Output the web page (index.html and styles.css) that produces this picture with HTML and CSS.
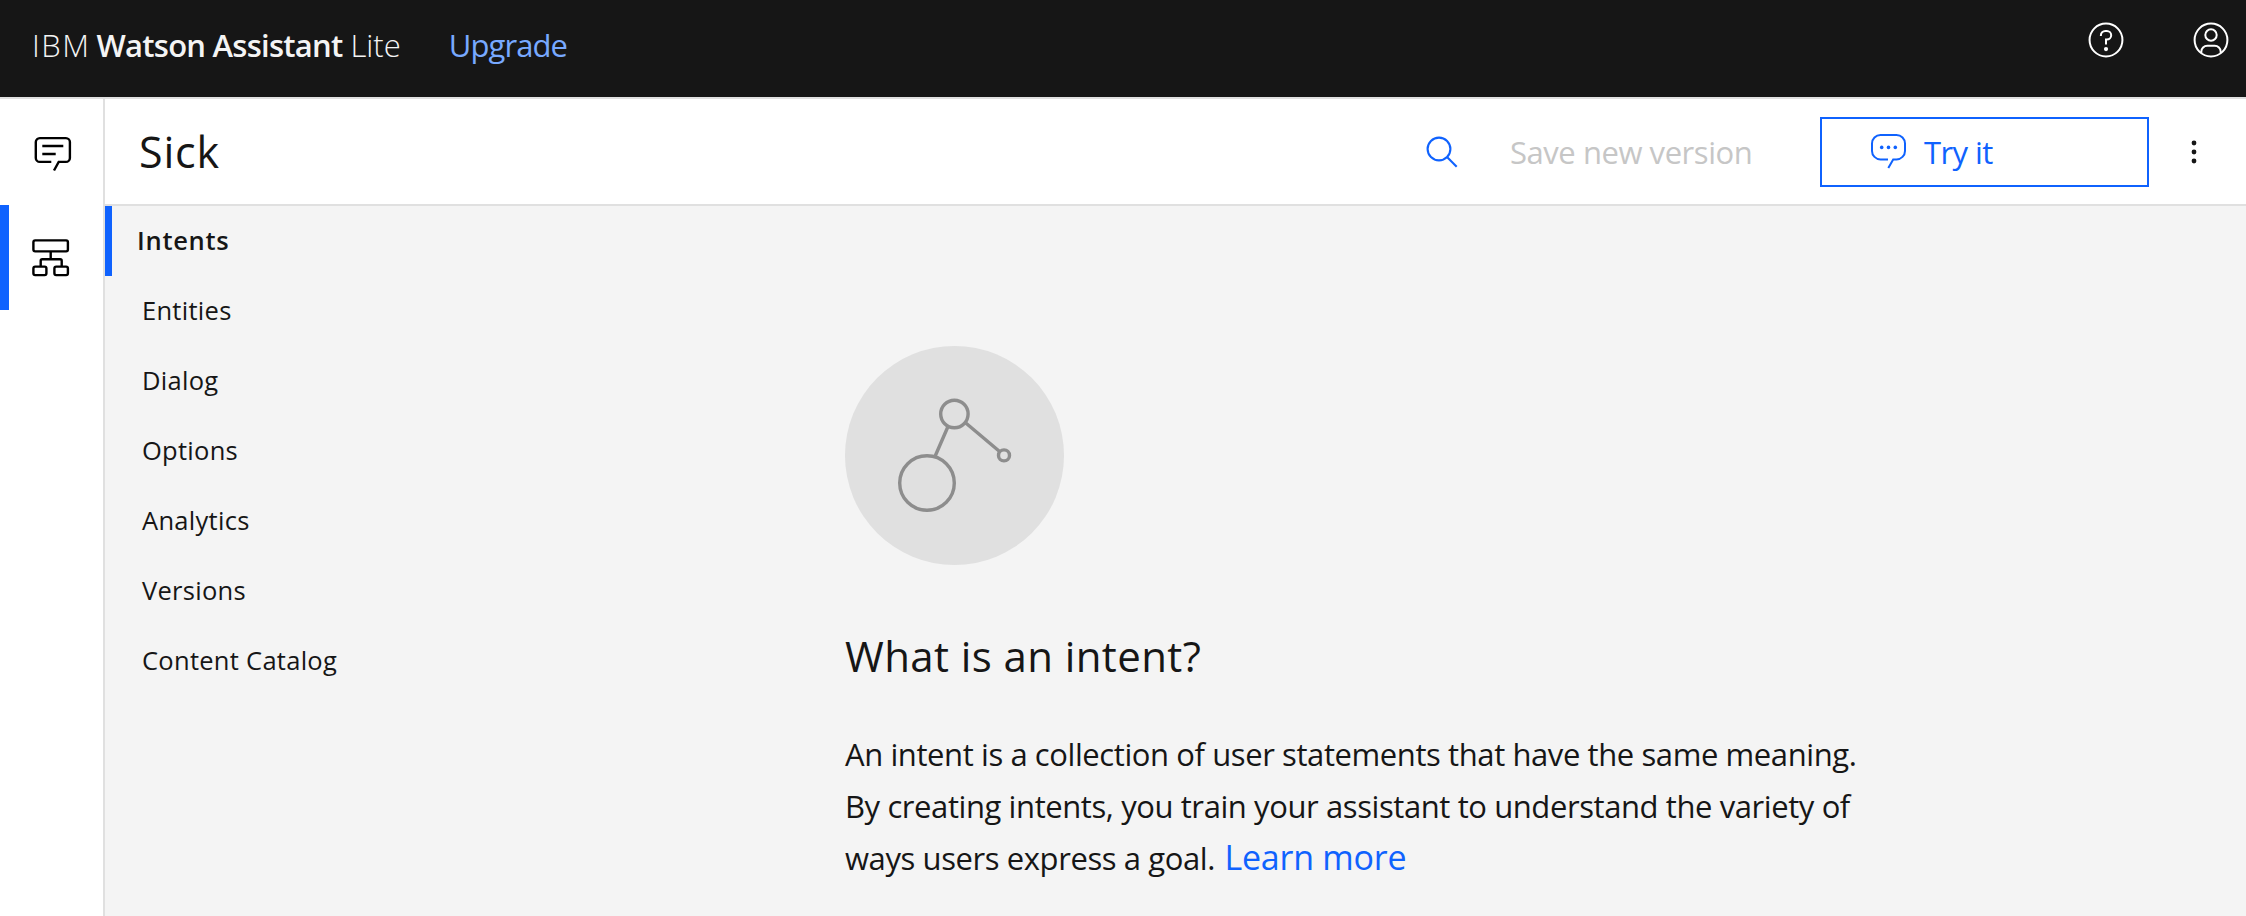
FILE: index.html
```html
<!DOCTYPE html>
<html lang="en">
<head>
<meta charset="utf-8">
<title>IBM Watson Assistant</title>
<link rel="stylesheet" href="styles.css">
</head>
<body>
<header class="topbar">
  <div class="brand"><span class="brand-ibm">IBM</span><strong class="brand-name">Watson Assistant</strong><span class="brand-plan">Lite</span></div>
  <a class="upgrade">Upgrade</a>
  <div class="topbar-actions">
    <svg class="icon-help" width="40" height="40" viewBox="0 0 32 32" fill="#fff"><circle cx="16" cy="16" r="13.150" fill="none" stroke="#fff" stroke-width="1.600"/><circle cx="16" cy="23.200" r="1.700"/><path d="M11.900 12.800v-.5a3.600 3.600 0 0 1 3.600-3.600h1.200a3.400 3.400 0 0 1 0 6.900H16v4" fill="none" stroke="#fff" stroke-width="1.600"/></svg>
    <svg class="icon-user" width="40" height="40" viewBox="0 0 40 40" fill="none" stroke="#fff" stroke-width="2"><circle cx="20" cy="20" r="16.400"/><circle cx="20" cy="15" r="5.700"/><path d="M10.300 33v-1.300a6 6 0 0 1 6-6h7.400a6 6 0 0 1 6 6V33"/></svg>
  </div>
</header>
<div class="shell">
  <nav class="rail">
    <a class="rail-item rail-chat"><svg width="40" height="40" viewBox="0 0 40 40" fill="none" stroke="#000" stroke-width="2.400"><path d="M18.300 27.900H6.800a4 4 0 0 1-4-4V8.100a4 4 0 0 1 4-4h26.100a4 4 0 0 1 4 4v15.800a4 4 0 0 1-4 4h-7.200L21 36.500M9.300 12h21M9.300 20h13.400"/></svg></a>
    <a class="rail-item rail-skills"><svg width="40" height="40" viewBox="0 0 40 40" fill="none" stroke="#000" stroke-width="2.400"><rect x="2.400" y="2.400" width="34.500" height="11" rx="1.800"/><rect x="2.400" y="28.600" width="13" height="8.500" rx="1.800"/><rect x="23.400" y="28.600" width="13.500" height="8.500" rx="1.800"/><path d="M19.700 13.400v8M9.700 28.600v-5.800a1.500 1.500 0 0 1 1.500-1.500h18a1.500 1.500 0 0 1 1.500 1.500v5.800"/></svg></a>
  </nav>
  <div class="workspace">
    <div class="skill-header">
      <h1 class="skill-title">Sick</h1>
      <svg class="icon-search" width="36" height="36" viewBox="0 0 36 36" fill="none" stroke="#0f62fe" stroke-width="2.100"><circle cx="15" cy="15" r="11.400"/><path d="M23 23l9.700 9.700"/></svg>
      <span class="save">Save new version</span>
      <button class="try"><svg width="40" height="40" viewBox="0 0 40 40" fill="none" stroke="#0f62fe" stroke-width="2"><path d="M19 27.400h-7.500a8.500 8.500 0 0 1-8.500-8.500v-7.400a8.500 8.500 0 0 1 8.500-8.500h16a8.500 8.500 0 0 1 8.500 8.500v7.400a8.500 8.500 0 0 1-8.500 8.500H24.200l-4.900 8.600"/><g fill="#0f62fe" stroke="none"><circle cx="12.700" cy="15.400" r="1.800"/><circle cx="19.500" cy="15.400" r="1.800"/><circle cx="26.300" cy="15.400" r="1.800"/></g></svg><span>Try it</span></button>
      <svg class="icon-more" width="6" height="24" viewBox="0 0 6 24" fill="#161616"><circle cx="3" cy="3" r="2.400"/><circle cx="3" cy="12" r="2.400"/><circle cx="3" cy="21" r="2.400"/></svg>
    </div>
    <div class="body">
      <nav class="menu">
        <a class="menu-item active">Intents</a>
        <a class="menu-item">Entities</a>
        <a class="menu-item">Dialog</a>
        <a class="menu-item">Options</a>
        <a class="menu-item">Analytics</a>
        <a class="menu-item">Versions</a>
        <a class="menu-item">Content Catalog</a>
      </nav>
      <main class="intro">
        <svg class="hero" width="219" height="219" viewBox="0 0 219 219"><circle cx="109.500" cy="109.500" r="109.500" fill="#e0e0e0"/><g fill="none" stroke="#8d8d8d" stroke-width="3.400"><circle cx="109.400" cy="68" r="13.700"/><circle cx="82" cy="137" r="27.300"/><circle cx="159" cy="109.400" r="5.500"/><path d="M103 80.500L90.200 110M120.500 76.700L154.600 105.500"/></g></svg>
        <h2 class="intro-title">What is an intent?</h2>
        <p class="intro-text">An intent is a collection of user statements that have the same meaning.<br>By creating intents, you train your assistant to understand the variety of<br>ways users express a goal. <a class="learn">Learn more</a></p>
      </main>
    </div>
  </div>
</div>
</body>
</html>
```
FILE: styles.css
```css
* { box-sizing: border-box; }
body {
  margin: 0;
  height: 916px;
  display: flex;
  flex-direction: column;
  overflow: hidden;
  background: #fff;
  color: #161616;
  font-family: "Open Sans", "Noto Sans", sans-serif;
  font-size: 31px;
}
svg { display: block; flex: none; }
.topbar {
  flex: none;
  height: 99px;
  display: flex;
  align-items: flex-start;
  padding: 0 15px 0 32px;
  background: #161616;
  border-bottom: 2px solid #e0e0e0;
  color: #f4f4f4;
  line-height: 90px;
  white-space: nowrap;
}
.brand { display: flex; font-weight: 300; }
.brand-ibm { letter-spacing: 1.5px; margin-right: 6px; }
.brand-name { font-weight: 600; letter-spacing: -0.75px; margin-right: 8px; }
.brand-plan { letter-spacing: 0; }
.upgrade { margin-left: 48px; color: #78a9ff; letter-spacing: -0.9px; }
.topbar-actions { display: flex; gap: 65px; margin: 20px 0 0 auto; }
.shell { flex: 1; min-height: 0; display: flex; }
.rail { width: 105px; flex: none; border-right: 2px solid #e0e0e0; padding-top: 1px; }
.rail-item { display: flex; height: 105px; }
.rail-chat { padding: 34px 0 0 33px; }
.rail-skills { padding: 33px 0 0 22px; border-left: 9px solid #0f62fe; }
.workspace { flex: 1; display: flex; flex-direction: column; }
.skill-header {
  flex: none;
  height: 107px;
  display: flex;
  align-items: center;
  padding: 0 49px 0 34px;
  border-bottom: 2px solid #e0e0e0;
  white-space: nowrap;
}
.skill-title { margin: 0 auto 0 0; font-size: 43px; font-weight: 400; line-height: 60px; letter-spacing: 0.8px; }
.icon-search { margin-right: 50px; }
.save { width: 310px; color: #c6c6c6; letter-spacing: -0.45px; line-height: 42px; }
.try {
  width: 329px;
  height: 70px;
  display: flex;
  align-items: center;
  gap: 15px;
  padding: 0 0 0 47px;
  border: 2px solid #0f62fe;
  background: #fff;
  color: #0f62fe;
  font: inherit;
  line-height: 42px;
  letter-spacing: -0.6px;
}
.icon-more { margin-left: 42px; }
.body { flex: 1; display: flex; background: #f4f4f4; }
.menu { width: 740px; flex: none; }
.menu-item {
  display: block;
  height: 70px;
  padding-left: 37px;
  font-size: 25.5px;
  line-height: 69px;
  letter-spacing: 0.28px;
}
.menu-item.active { padding-left: 25px; border-left: 7px solid #0f62fe; font-weight: 600; letter-spacing: 0.7px; }
.intro { padding-top: 140px; }
.intro-title { margin: 61px 0 42px; font-size: 42px; font-weight: 400; line-height: 60px; letter-spacing: 0.4px; }
.intro-text { margin: 0; line-height: 52px; letter-spacing: -0.41px; white-space: nowrap; }
.learn { margin-left: 2px; font-size: 34px; line-height: 1; letter-spacing: -0.25px; color: #0f62fe; }
```
